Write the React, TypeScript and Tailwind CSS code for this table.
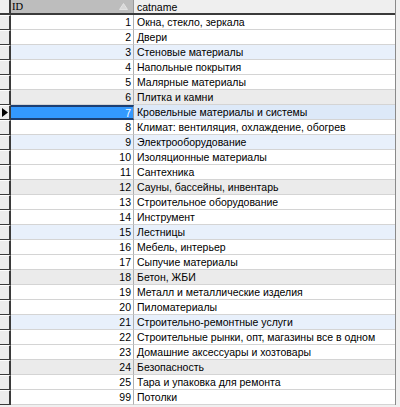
import React from "react";

const rows: [number, string][] = [
  [1, "Окна, стекло, зеркала"],
  [2, "Двери"],
  [3, "Стеновые материалы"],
  [4, "Напольные покрытия"],
  [5, "Малярные материалы"],
  [6, "Плитка и камни"],
  [7, "Кровельные материалы и системы"],
  [8, "Климат: вентиляция, охлаждение, обогрев"],
  [9, "Электрооборудование"],
  [10, "Изоляционные материалы"],
  [11, "Сантехника"],
  [12, "Сауны, бассейны, инвентарь"],
  [13, "Строительное оборудование"],
  [14, "Инструмент"],
  [15, "Лестницы"],
  [16, "Мебель, интерьер"],
  [17, "Сыпучие материалы"],
  [18, "Бетон, ЖБИ"],
  [19, "Металл и металлические изделия"],
  [20, "Пиломатериалы"],
  [21, "Строительно-ремонтные услуги"],
  [22, "Строительные рынки, опт, магазины все в одном"],
  [23, "Домашние аксессуары и хозтовары"],
  [24, "Безопасность"],
  [25, "Тара и упаковка для ремонта"],
  [99, "Потолки"],
];

function rowBg(i: number): string {
  if ((i + 1) % 3 !== 0) return "bg-white";
  return ((i + 1) / 3) % 2 === 1 ? "bg-[#e8f0fb]" : "bg-[#ebebeb]";
}

export default function App() {
  return (
    <div
      className="w-[400px] h-[407px] bg-[#f0f0f0] overflow-hidden text-[10.5px] leading-[14px] text-black"
      style={{ fontFamily: '"Liberation Sans", Arial, sans-serif' }}
    >
      <div className="w-[396px] border-r border-[#8a8a8a]">
        {/* header */}
        <div className="flex h-[15px] border-b-2 border-[#3a3a3a]">
          <div className="w-[11px] bg-[#f0f0f0] border-r-2 border-[#3a3a3a]" />
          <div className="w-[123px] bg-[#bdbdbd] border-r border-[#9a9a9a] flex items-center pl-[1px] pr-[5px]">
            <span className="flex-1" style={{ fontFamily: '"Liberation Serif", serif' }}>ID</span>
            <svg width="9" height="7" viewBox="0 0 9 7">
              <path d="M4.5 0.5 L8.5 6.5 L0.5 6.5 Z" fill="#d8d8d8" stroke="#e8e8e8" strokeWidth="0.8" />
            </svg>
          </div>
          <div className="flex-1 bg-[#efefef] flex items-center pl-[3px]">catname</div>
        </div>
        {rows.map(([id, name], i) => {
          const selected = id === 7;
          return (
            <div key={id} className="flex h-[15px]">
              <div className="w-[11px] bg-[#ececec] border-r-2 border-b border-[#3a3a3a] border-t border-t-white flex items-center justify-center">
                {selected && (
                  <svg width="6" height="9" viewBox="0 0 6 9">
                    <path d="M0 0 L6 4.5 L0 9 Z" fill="#000" />
                  </svg>
                )}
              </div>
              <div
                className={
                  selected
                    ? "w-[123px] bg-[#3399ff] border-y-2 border-[#1c3f73] border-r border-r-[#9a9a9a] text-white flex items-center justify-end pr-[2px]"
                    : `w-[123px] ${rowBg(i)} border-b border-[#d4d4d4] border-r border-r-[#b0b0b0] flex items-center justify-end pr-[2px]`
                }
              >
                {id}
              </div>
              <div
                className={
                  selected
                    ? "flex-1 bg-[#dde9f8] border-b border-[#d4d4d4] flex items-center pl-[3px]"
                    : `flex-1 ${rowBg(i)} border-b border-[#d4d4d4] flex items-center pl-[3px]`
                }
              >
                {name}
              </div>
            </div>
          );
        })}
      </div>
    </div>
  );
}
